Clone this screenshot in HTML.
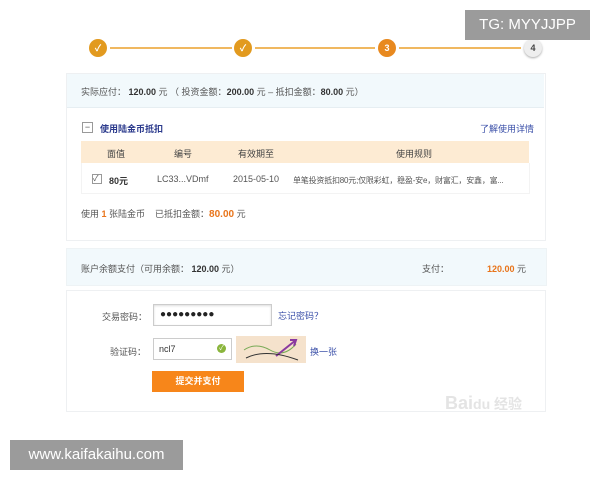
<!DOCTYPE html>
<html><head><meta charset="utf-8"><style>
body{margin:0;width:600px;height:480px;background:#fff;position:relative;font-family:"Liberation Sans","Noto Sans CJK SC",sans-serif;font-size:9px;color:#555;overflow:hidden}
.a{position:absolute;white-space:nowrap}
.c{position:absolute;width:18px;height:18px;border-radius:50%;background:#e29a1f;color:#fff;text-align:center;line-height:18px;font-size:9px;font-weight:bold}
.ln{position:absolute;height:2px;background:#f0b860;top:47px}
.b{font-weight:bold;color:#333}
.o{color:#e8741a;font-weight:bold}
.lk{color:#3a4fa8}
</style></head><body>
<div class="c" style="left:89px;top:39px">✓</div>
<div class="ln" style="left:110px;width:122px"></div>
<div class="c" style="left:234px;top:39px">✓</div>
<div class="ln" style="left:255px;width:120px"></div>
<div class="c" style="left:378px;top:39px;background:#e8891f">3</div>
<div class="ln" style="left:399px;width:122px"></div>
<div class="c" style="left:524px;top:39px;background:#eee;color:#444;box-shadow:0 1px 2px #aaa">4</div>

<div class="a" style="left:66px;top:73px;width:478px;height:166px;border:1px solid #eef0f2"></div>
<div class="a" style="left:67px;top:74px;width:477px;height:33px;background:#f2f9fc;border-bottom:1px solid #e6eef2"></div>
<div class="a" style="left:81px;top:85px">实际应付： <span class="b">120.00</span> 元 （ 投资金额：<span class="b">200.00</span> 元 – 抵扣金额：<span class="b">80.00</span> 元）</div>
<div class="a" style="left:82px;top:122px;width:9px;height:9px;border:1px solid #999;font-size:9px;line-height:8px;text-align:center">−</div>
<div class="a" style="left:100px;top:122px;color:#2b3a8c;font-weight:bold">使用陆金币抵扣</div>
<div class="a lk" style="left:480px;top:122px">了解使用详情</div>
<div class="a" style="left:81px;top:141px;width:448px;height:22px;background:#fdebd3"></div>
<div class="a" style="left:107px;top:147px;color:#444">面值</div>
<div class="a" style="left:174px;top:147px;color:#444">编号</div>
<div class="a" style="left:238px;top:147px;color:#444">有效期至</div>
<div class="a" style="left:396px;top:147px;color:#444">使用规则</div>
<div class="a" style="left:81px;top:163px;width:447px;height:30px;border:1px solid #f3f3f3;border-top:none"></div>
<div class="a" style="left:92px;top:174px;width:8px;height:8px;border:1px solid #999;font-size:8px;line-height:8px;color:#555">✓</div>
<div class="a b" style="left:109px;top:174px">80元</div>
<div class="a" style="left:157px;top:174px">LC33...VDmf</div>
<div class="a" style="left:233px;top:174px">2015-05-10</div>
<div class="a" style="left:293px;top:175px;font-size:8px;letter-spacing:-0.2px">单笔投资抵扣80元;仅限彩虹，稳盈-安e，财富汇，安鑫，富...</div>
<div class="a" style="left:81px;top:207px">使用 <span class="o">1</span> 张陆金币 &nbsp;&nbsp; 已抵扣金额：<span class="o" style="font-size:10px">80.00</span> 元</div>

<div class="a" style="left:66px;top:248px;width:479px;height:36px;background:#f2f9fc;border:1px solid #eef3f5"></div>
<div class="a" style="left:81px;top:262px">账户余额支付（可用余额： <span class="b">120.00</span> 元）</div>
<div class="a" style="left:422px;top:262px">支付：</div>
<div class="a" style="left:487px;top:262px"><span class="o">120.00</span> 元</div>

<div class="a" style="left:66px;top:290px;width:478px;height:120px;border:1px solid #eef0f2"></div>
<div class="a" style="left:102px;top:310px">交易密码：</div>
<div class="a" style="left:153px;top:304px;width:117px;height:20px;border:1px solid #ccc;box-shadow:inset 0 1px 2px #ddd;font-size:10px;line-height:20px;text-indent:6px;color:#222">●●●●●●●●●</div>
<div class="a lk" style="left:278px;top:309px">忘记密码？</div>
<div class="a" style="left:110px;top:345px">验证码：</div>
<div class="a" style="left:153px;top:338px;width:77px;height:20px;border:1px solid #ccc;line-height:20px;text-indent:5px;color:#333">ncl7</div>
<div class="a" style="left:217px;top:344px;width:9px;height:9px;border-radius:50%;background:#8ab53c;color:#fff;font-size:7px;line-height:9px;text-align:center">✓</div>
<div class="a" style="left:236px;top:336px;width:70px;height:27px;background:#f5e2cc"><svg width="70" height="27"><path d="M8 14 Q20 6 34 14 T60 8" stroke="#7a5" fill="none"/><path d="M40 20 L60 4 M54 4 L60 4 L58 10" stroke="#8a3aa0" stroke-width="2" fill="none"/><path d="M10 22 Q30 12 62 24" stroke="#333" fill="none"/></svg></div>
<div class="a lk" style="left:310px;top:345px">换一张</div>
<div class="a" style="left:152px;top:371px;width:92px;height:21px;background:#f7861a;color:#fff;text-align:center;line-height:21px;font-size:9px;font-weight:bold">提交并支付</div>
<div class="a" style="left:445px;top:393px;color:#e4e4e4;font-size:18px;font-weight:bold">Bai<span style="font-size:14px">du 经验</span></div>

<div class="a" style="left:465px;top:10px;width:125px;height:30px;background:#9b9b9b;color:#fff;font-size:15px;line-height:30px;text-align:center">TG: MYYJJPP</div>
<div class="a" style="left:10px;top:440px;width:173px;height:30px;background:#9b9b9b;color:#fff;font-size:15px;line-height:30px;text-align:center">www.kaifakaihu.com</div>
</body></html>
